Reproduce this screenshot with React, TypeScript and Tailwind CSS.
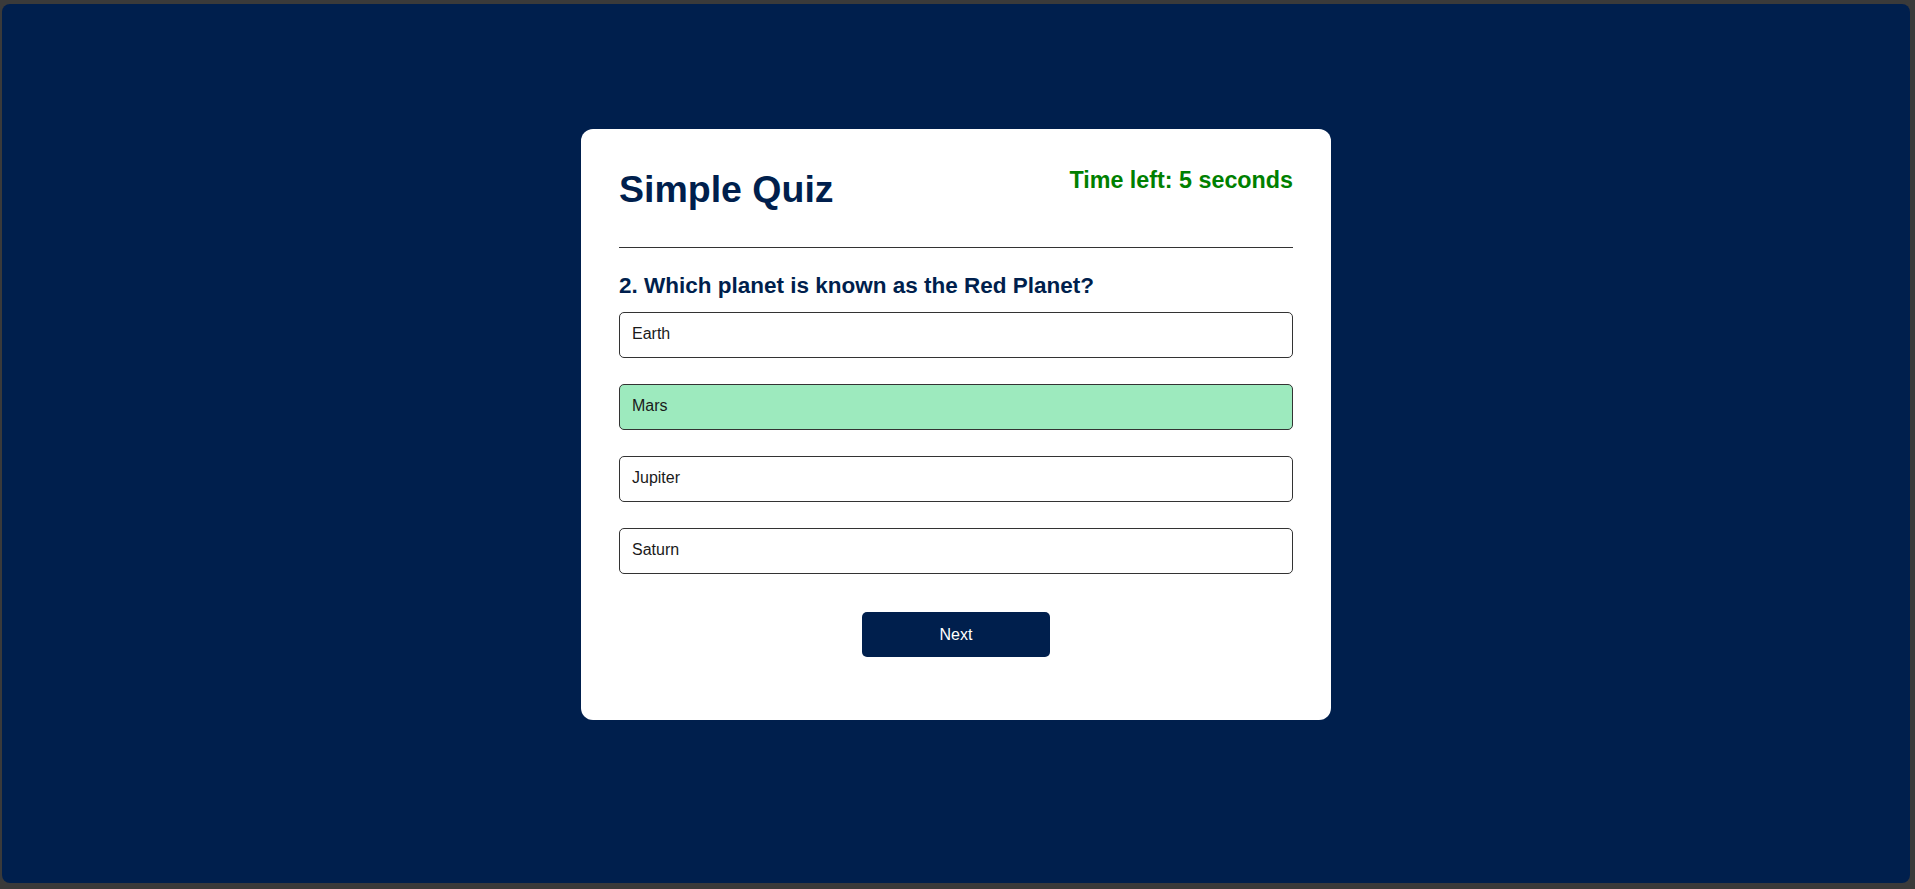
const options = ['Earth', 'Mars', 'Jupiter', 'Saturn']

export default function App() {
  const selected = 'Mars'

  return (
    <div
      className="h-screen w-full bg-[#3a3a3a] pt-[4px] pl-[2px] pr-[5px] pb-[6px]"
      style={{ fontFamily: '"Liberation Sans", Arial, sans-serif' }}
    >
      <div className="flex h-full w-full justify-center rounded-lg bg-[#001f4d] pt-[125px]">
        <div className="flex h-[591px] w-[750px] flex-col rounded-xl bg-white p-[38px]">
          <div className="flex items-start justify-between">
            <h1 className="text-[37.5px] font-bold leading-[44px] text-[#001f4d]">
              Simple Quiz
            </h1>
            <div className="text-[23.3px] font-bold leading-[26px] text-[#008000]">
              Time left: 5 seconds
            </div>
          </div>

          <div className="mt-[36px] h-px w-full bg-[#333333]" />

          <h2 className="mt-[25px] text-[22.5px] font-bold leading-[26px] text-[#001f4d]">
            2. Which planet is known as the Red Planet?
          </h2>

          <div className="mt-[13px] flex flex-col gap-[26px]">
            {options.map((opt) => (
              <div
                key={opt}
                className={
                  opt === selected
                    ? 'h-[46px] rounded-[5px] border border-[#333333] bg-[#9deabe] px-[12px] pt-[12px] text-[16px] leading-[18px] text-[#1a1a1a]'
                    : 'h-[46px] rounded-[5px] border border-[#333333] bg-white px-[12px] pt-[12px] text-[16px] leading-[18px] text-[#1a1a1a]'
                }
              >
                {opt}
              </div>
            ))}
          </div>

          <div className="mt-[38px] flex justify-center">
            <button className="flex h-[45px] w-[188px] items-center justify-center rounded-[5px] bg-[#001f4d] text-[16px] text-white">
              Next
            </button>
          </div>
        </div>
      </div>
    </div>
  )
}
